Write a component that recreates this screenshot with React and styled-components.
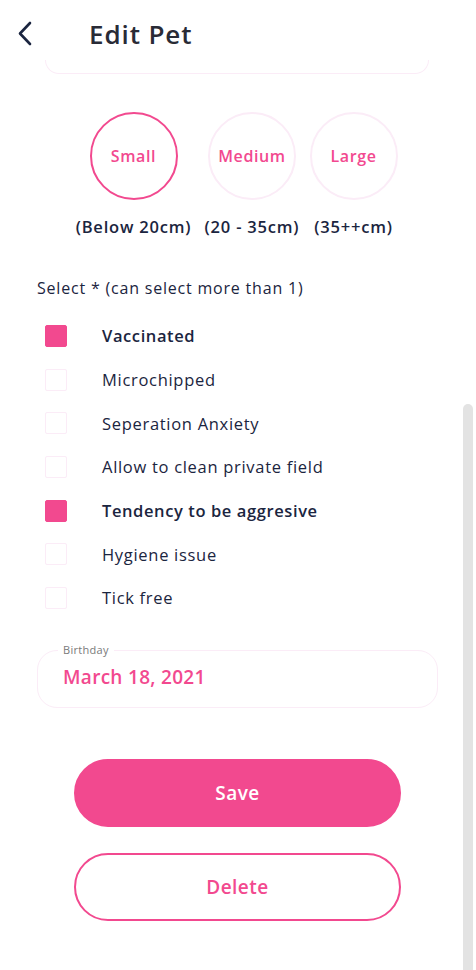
import React, { useState } from 'react';
import styled, { createGlobalStyle } from 'styled-components';

const GlobalStyle = createGlobalStyle`
  body {
    margin: 0;
    background: #ffffff;
    font-family: "Open Sans", Lato, sans-serif;
  }
`;

const PINK = '#f2498f';
const NAVY = '#1b2540';
const FAINT = '#fbecf7';

const sizes = [
  { name: 'Small', range: '(Below 20cm)', width: 117 },
  { name: 'Medium', range: '(20 - 35cm)', width: 100 },
  { name: 'Large', range: '(35++cm)', width: 83 },
];

const options = [
  { label: 'Vaccinated', checked: true },
  { label: 'Microchipped', checked: false },
  { label: 'Seperation Anxiety', checked: false },
  { label: 'Allow to clean private field', checked: false },
  { label: 'Tendency to be aggresive', checked: true },
  { label: 'Hygiene issue', checked: false },
  { label: 'Tick free', checked: false },
];

const EditPet = () => {
  const [size, setSize] = useState('Small');
  const [checks, setChecks] = useState(options.map((o) => o.checked));

  const toggle = (i) => {
    setChecks(checks.map((c, j) => (j === i ? !c : c)));
  };

  return (
    <Screen>
      <GlobalStyle />
      <Header>
        <BackButton>
          <svg width="16" height="26" viewBox="0 0 16 26" fill="none">
            <path d="M13 2 L3 12.5 L13 23" stroke={NAVY} strokeWidth="2.6" strokeLinecap="round" strokeLinejoin="round" />
          </svg>
        </BackButton>
        <Title>Edit Pet</Title>
      </Header>
      <CutField />

      <SizeRow>
        {sizes.map((s) => (
          <SizeColumn key={s.name} w={s.width}>
            <SizeCircle active={size === s.name} onClick={() => setSize(s.name)}>
              {s.name}
            </SizeCircle>
            <SizeRange>{s.range}</SizeRange>
          </SizeColumn>
        ))}
      </SizeRow>

      <SelectLabel>Select * (can select more than 1)</SelectLabel>
      <CheckList>
        {options.map((o, i) => (
          <CheckRow key={o.label} onClick={() => toggle(i)}>
            <CheckBox checked={checks[i]} />
            <CheckText checked={checks[i]}>{o.label}</CheckText>
          </CheckRow>
        ))}
      </CheckList>

      <Field>
        <FieldLabel>Birthday</FieldLabel>
        <FieldValue>March 18, 2021</FieldValue>
      </Field>

      <Buttons>
        <Button primary>Save</Button>
        <Button>Delete</Button>
      </Buttons>

      <ScrollThumb />
    </Screen>
  );
};

const Screen = styled.div`
  position: relative;
  width: 476px;
  height: 970px;
  overflow: hidden;
  background: #ffffff;
`;

const Header = styled.div`
  display: flex;
  align-items: center;
  height: 60px;
  padding: 8px 0 0 17px;
  box-sizing: border-box;
`;

const BackButton = styled.div`
  display: flex;
  align-items: center;
  cursor: pointer;
`;

const Title = styled.h1`
  margin: 0 0 0 56px;
  font-size: 26px;
  font-weight: 600;
  letter-spacing: 0.9px;
  color: #292b36;
`;

const CutField = styled.div`
  margin: 0 47px 0 45px;
  height: 13px;
  border: 1px solid ${FAINT};
  border-top: none;
  border-radius: 0 0 20px 20px;
`;

const SizeRow = styled.div`
  display: flex;
  gap: 10px;
  padding-left: 75px;
  margin-top: 38px;
`;

const SizeColumn = styled.div`
  width: ${(p) => p.w}px;
  display: flex;
  flex-direction: column;
  align-items: center;
  gap: 17px;
`;

const SizeCircle = styled.div`
  width: 88px;
  height: 88px;
  flex-shrink: 0;
  box-sizing: border-box;
  border-radius: 50%;
  border: 2px solid ${(p) => (p.active ? PINK : FAINT)};
  display: flex;
  align-items: center;
  justify-content: center;
  color: ${PINK};
  font-size: 16px;
  font-weight: 600;
  letter-spacing: 0.6px;
  cursor: pointer;
`;

const SizeRange = styled.div`
  font-size: 16.5px;
  line-height: 20px;
  font-weight: 600;
  letter-spacing: 0.8px;
  color: ${NAVY};
  white-space: nowrap;
`;

const SelectLabel = styled.div`
  margin: 41px 0 0 37px;
  font-size: 16px;
  line-height: 20px;
  letter-spacing: 0.8px;
  color: ${NAVY};
`;

const CheckList = styled.div`
  display: flex;
  flex-direction: column;
  margin-top: 16px;
`;

const CheckRow = styled.div`
  display: flex;
  align-items: center;
  height: 43.7px;
  padding-left: 45px;
  cursor: pointer;
`;

const CheckBox = styled.div`
  width: 22px;
  height: 22px;
  box-sizing: border-box;
  border-radius: 2px;
  background: ${(p) => (p.checked ? PINK : '#ffffff')};
  border: 1px solid ${(p) => (p.checked ? PINK : FAINT)};
`;

const CheckText = styled.span`
  margin-left: 35px;
  font-size: 16.5px;
  font-weight: ${(p) => (p.checked ? 600 : 400)};
  letter-spacing: ${(p) => (p.checked ? '0.6px' : '0.7px')};
  color: ${NAVY};
`;

const Field = styled.div`
  position: relative;
  margin: 30px 38px 0 37px;
  height: 58px;
  box-sizing: border-box;
  border: 1px solid ${FAINT};
  border-radius: 20px;
  display: flex;
  align-items: center;
  padding-left: 25px;
`;

const FieldLabel = styled.span`
  position: absolute;
  top: -9px;
  left: 20px;
  padding: 0 5px;
  background: #ffffff;
  font-size: 11px;
  line-height: 16px;
  letter-spacing: 0.3px;
  color: #7a7a7a;
`;

const FieldValue = styled.div`
  font-size: 19px;
  font-weight: 600;
  letter-spacing: 0.3px;
  color: ${PINK};
  margin-top: -4px;
`;

const Buttons = styled.div`
  display: flex;
  flex-direction: column;
  gap: 26px;
  margin: 51px 0 0 74px;
  width: 327px;
`;

const Button = styled.button`
  height: 68px;
  border-radius: 34px;
  box-sizing: border-box;
  border: 2px solid ${PINK};
  background: ${(p) => (p.primary ? PINK : '#ffffff')};
  color: ${(p) => (p.primary ? '#ffffff' : PINK)};
  font-family: "Open Sans", Lato, sans-serif;
  font-size: 19px;
  font-weight: 600;
  letter-spacing: 0.5px;
  cursor: pointer;
`;

const ScrollThumb = styled.div`
  position: absolute;
  right: 3px;
  top: 404px;
  width: 10px;
  height: 580px;
  border-radius: 5px;
  background: #e3e3e3;
`;

export default function App() {
  return <EditPet />;
}
